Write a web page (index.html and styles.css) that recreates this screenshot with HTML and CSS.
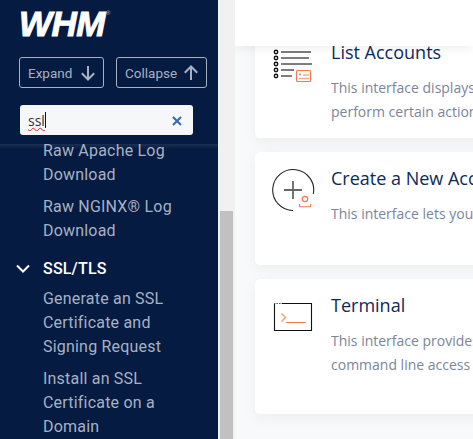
FILE: index.html
```html
<!DOCTYPE html>
<html lang="en">
<head>
    <meta charset="UTF-8">
    <meta name="viewport" content="width=device-width, initial-scale=1.0">
    <title>WHM</title>
    <link rel="stylesheet" href="styles.css">
</head>
<body>
    <div class="sidebar">
        <div class="side-head">
            <div class="logo">WHM<sup>®</sup></div>
            <div class="side-buttons">
                <button class="side-btn expand">Expand
                    <svg width="14" height="16" viewBox="0 0 14 16"><path d="M7 1v13.500M.8 8.300L7 14.500l6.200-6.200" fill="none" stroke="currentColor" stroke-width="2"/></svg>
                </button>
                <button class="side-btn collapse">Collapse
                    <svg width="14" height="16" viewBox="0 0 14 16"><path d="M7 15V1.500M.8 7.700L7 1.500l6.200 6.200" fill="none" stroke="currentColor" stroke-width="2"/></svg>
                </button>
            </div>
            <div class="search">
                <span class="search-text">ssl</span><span class="caret"></span>
                <svg class="search-clear" width="10" height="10" viewBox="0 0 10 10"><path d="M1 1l8 8M9 1l-8 8" stroke="#3d6cb0" stroke-width="2.200"/></svg>
            </div>
        </div>
        <div class="menu">
            <a class="menu-item">Raw Apache Log Download</a>
            <a class="menu-item">Raw NGINX® Log Download</a>
            <div class="menu-group">
                <svg width="14" height="9" viewBox="0 0 14 9"><path d="M1 1.500l6 6 6-6" fill="none" stroke="#fff" stroke-width="2"/></svg>
                SSL/TLS
            </div>
            <a class="menu-item">Generate an SSL Certificate and Signing Request</a>
            <a class="menu-item">Install an SSL Certificate on a Domain</a>
        </div>
    </div>

    <div class="scrollbar"><div class="scroll-thumb"></div></div>

    <div class="main">
        <div class="topbar"></div>
        <div class="cards">
            <div class="card card-list">
                <svg class="card-icon" width="44" height="40" viewBox="0 0 44 40">
                    <g fill="none" stroke="#111" stroke-width="1.400">
                        <circle cx="5" cy="6" r="1.700"/>
                        <circle cx="5" cy="12" r="1.700"/>
                        <circle cx="5" cy="18" r="1.700"/>
                        <circle cx="5" cy="24" r="1.700"/>
                        <circle cx="5" cy="30" r="1.700"/>
                    </g>
                    <path d="M10 6h30M10 12h28M10 18h31M10 24h13M10 30h11" stroke="#7d7d7d" stroke-width="2"/>
                    <rect x="25.500" y="24.500" width="14" height="11" rx="1" fill="#fff" stroke="#f4794a" stroke-width="1.200"/>
                    <path d="M32 29h6M28 32.500h10" stroke="#f9ab8c" stroke-width="1.500"/>
                    <circle cx="29" cy="28.500" r="1" fill="#f4794a"/>
                </svg>
                <div class="card-body">
                    <h3>List Accounts</h3>
                    <p>This interface displays information about the accounts on your server</p>
                    <p>perform certain actions on those accounts from this interface</p>
                </div>
            </div>
            <div class="card card-create">
                <svg class="card-icon" width="44" height="44" viewBox="0 0 44 44">
                    <path d="M42.300 26A20.500 20.500 0 1 0 22 42.500" fill="none" stroke="#222" stroke-width="1.100"/>
                    <path d="M22 13v18M13 22h18" stroke="#666" stroke-width="1.800"/>
                    <circle cx="34" cy="31" r="2.700" fill="none" stroke="#f4794a" stroke-width="1.200"/>
                    <path d="M28.500 36v2.700h11V36" fill="none" stroke="#f4794a" stroke-width="1.100"/>
                </svg>
                <div class="card-body">
                    <h3>Create a New Account</h3>
                    <p>This interface lets you create a new account on your server</p>
                </div>
            </div>
            <div class="card card-terminal">
                <svg class="card-icon" width="44" height="36" viewBox="0 0 44 36">
                    <path d="M3.500 6.500v27h37v-27H11" fill="none" stroke="#111" stroke-width="1.100"/>
                    <path d="M3 6.500h8" stroke="#555" stroke-width="1" stroke-dasharray="1.500 1"/>
                    <path d="M10.500 16.500l4 4-4 4" fill="none" stroke="#f9a27e" stroke-width="1.500"/>
                    <path d="M15 25.500h20" stroke="#f4794a" stroke-width="1"/>
                </svg>
                <div class="card-body">
                    <h3>Terminal</h3>
                    <p>This interface provides a terminal for your server with</p>
                    <p>command line access to run commands as the root user</p>
                </div>
            </div>
        </div>
    </div>
</body>
</html>
```

FILE: styles.css
```css
* {
    box-sizing: border-box;
}
html, body {
    height: 100%;
}
body {
    margin: 0;
    display: flex;
    overflow: hidden;
    font-family: "Open Sans", sans-serif;
    background-color: #f8f9fa;
}
.sidebar {
    width: 218px;
    flex: none;
    height: 100%;
    overflow: hidden;
    background-color: #051b41;
    font-family: Roboto, sans-serif;
}
.side-head {
    position: relative;
    z-index: 1;
    height: 144px;
    padding: 5px 0 0 19px;
    background-color: #051b41;
}
.side-head::after {
    content: "";
    position: absolute;
    left: 0;
    right: 0;
    top: 100%;
    height: 5px;
    background: linear-gradient(rgba(255, 255, 255, 0.09), rgba(255, 255, 255, 0));
}
.logo {
    height: 36px;
    color: #fff;
    font-family: "Liberation Sans", sans-serif;
    font-size: 35px;
    font-weight: bold;
    font-style: italic;
    line-height: 37px;
    letter-spacing: -0.5px;
    -webkit-text-stroke: 1px #fff;
}
.logo sup {
    font-size: 6px;
    font-style: normal;
    font-weight: normal;
    letter-spacing: 0;
    vertical-align: 21px;
    line-height: 0;
    color: #b4bccb;
    margin-left: 1px;
    -webkit-text-stroke: 0;
}
.side-buttons {
    display: flex;
    gap: 12px;
    margin-top: 16px;
}
.side-btn {
    display: flex;
    align-items: center;
    justify-content: space-between;
    height: 31px;
    padding: 0 8px;
    border: 1px solid #a8b1c4;
    border-radius: 3px;
    background: none;
    color: #a8b1c4;
    font-family: Roboto, sans-serif;
    font-size: 13.500px;
}
.expand {
    width: 85px;
}
.collapse {
    width: 91px;
}
.search {
    position: relative;
    display: flex;
    align-items: center;
    width: 173px;
    height: 30px;
    margin: 17px 0 0 1px;
    padding-left: 8px;
    border-radius: 3px;
    background-color: #f6f7f9;
    color: #333;
    font-size: 14px;
}
.search-text {
    text-decoration: underline wavy #d22;
    text-decoration-thickness: 1px;
    font-family: "Open Sans", sans-serif;
}
.caret {
    width: 1px;
    height: 16px;
    background-color: #111;
}
.search-clear {
    position: absolute;
    right: 11px;
    top: 11px;
}
.menu {
    margin-top: -5px;
    padding-left: 43px;
    padding-right: 40px;
    font-size: 16px;
    line-height: 24px;
    letter-spacing: 0.2px;
    color: #a8b1c4;
}
.menu-item {
    display: block;
    margin-bottom: 8px;
}
.menu-group {
    position: relative;
    margin: 14px 0 6px;
    color: #fff;
    font-weight: 500;
}
.menu-group svg {
    position: absolute;
    left: -27px;
    top: 7px;
}
.scrollbar {
    width: 17px;
    flex: none;
    height: 100%;
    padding: 211px 2px 0;
    background-color: #f1f1f1;
}
.scroll-thumb {
    height: 100%;
    background-color: #c1c1c1;
}
.main {
    flex: 1;
    min-width: 0;
    overflow: hidden;
}
.topbar {
    position: relative;
    z-index: 1;
    height: 46px;
    background-color: #fff;
    box-shadow: 0 2px 10px rgba(0, 0, 0, 0.07);
}
.cards {
    width: 600px;
    margin: -20px 0 0 20px;
    display: flex;
    flex-direction: column;
    gap: 14px;
}
.card {
    display: flex;
    border-radius: 5px;
    background-color: #fff;
    box-shadow: 0 4px 14px rgba(0, 0, 0, 0.05);
}
.card-list {
    height: 112px;
}
.card-create {
    height: 113px;
}
.card-terminal {
    height: 135px;
}
.card-icon {
    flex: none;
    margin-left: 16px;
}
.card-list .card-icon {
    margin-top: 20px;
}
.card-create .card-icon {
    margin-top: 16px;
}
.card-terminal .card-icon {
    margin-top: 18px;
}
.card-body {
    margin-left: 16px;
    white-space: nowrap;
}
.card-body h3 {
    margin: 13px 0 11px;
    color: #0b2a5c;
    font-size: 18px;
    font-weight: 400;
    line-height: 26px;
}
.card-body p {
    margin: 0;
    color: #7c8499;
    font-size: 14px;
    line-height: 24px;
}
```
